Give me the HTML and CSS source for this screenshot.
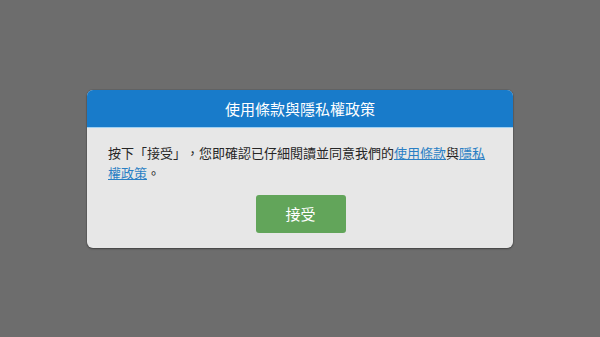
FILE: index.html
```html
<!DOCTYPE html>
<html lang="zh-Hant">
<head>
<meta charset="utf-8">
<link rel="stylesheet" href="styles.css">
</head>
<body>
<div class="screen">
  <div class="dialog">
    <div class="dialog-header">使用條款與隱私權政策</div>
    <div class="dialog-body">
      <p class="message">按下「接受」，您即確認已仔細閱讀並同意我們的<a href="#" class="link">使用條款</a>與<a href="#" class="link">隱私權政策</a>。</p>
      <div class="actions"><button class="accept">接受</button></div>
    </div>
  </div>
</div>
</body>
</html>
```
FILE: styles.css
```css
html, body {
  margin: 0;
  padding: 0;
  height: 100%;
}
body {
  background: #6d6d6d;
  font-family: "Noto Sans CJK TC", "Noto Sans", sans-serif;
  text-spacing-trim: space-all;
}
.screen {
  height: 337px;
  display: flex;
  align-items: center;
  justify-content: center;
}
.dialog {
  width: 426px;
  background: #e7e7e7;
  border-radius: 6px;
  overflow: hidden;
  box-shadow: 0 1px 2px rgba(0,0,0,0.35), 0 0 0 1px rgba(0,0,0,0.08);
}
.dialog-header {
  height: 37px;
  background: #187bca;
  color: #ffffff;
  font-size: 15px;
  display: flex;
  align-items: center;
  justify-content: center;
  border-bottom: 1px solid #9fd0f2;
}
.dialog-body {
  padding: 15px 20px 15px 21px;
}
.message {
  margin: 0;
  font-size: 13px;
  line-height: 20px;
  color: #262626;
  text-spacing-trim: space-all;
}
.link {
  color: #2a7fc4;
  text-decoration: underline;
}
.actions {
  display: flex;
  justify-content: center;
  margin-top: 12px;
}
.accept {
  width: 90px;
  height: 38px;
  border: none;
  border-radius: 3px;
  background: #62a55a;
  color: #ffffff;
  font-family: "Noto Sans CJK TC", "Noto Sans", sans-serif;
  font-size: 15px;
  padding: 0;
}
```
